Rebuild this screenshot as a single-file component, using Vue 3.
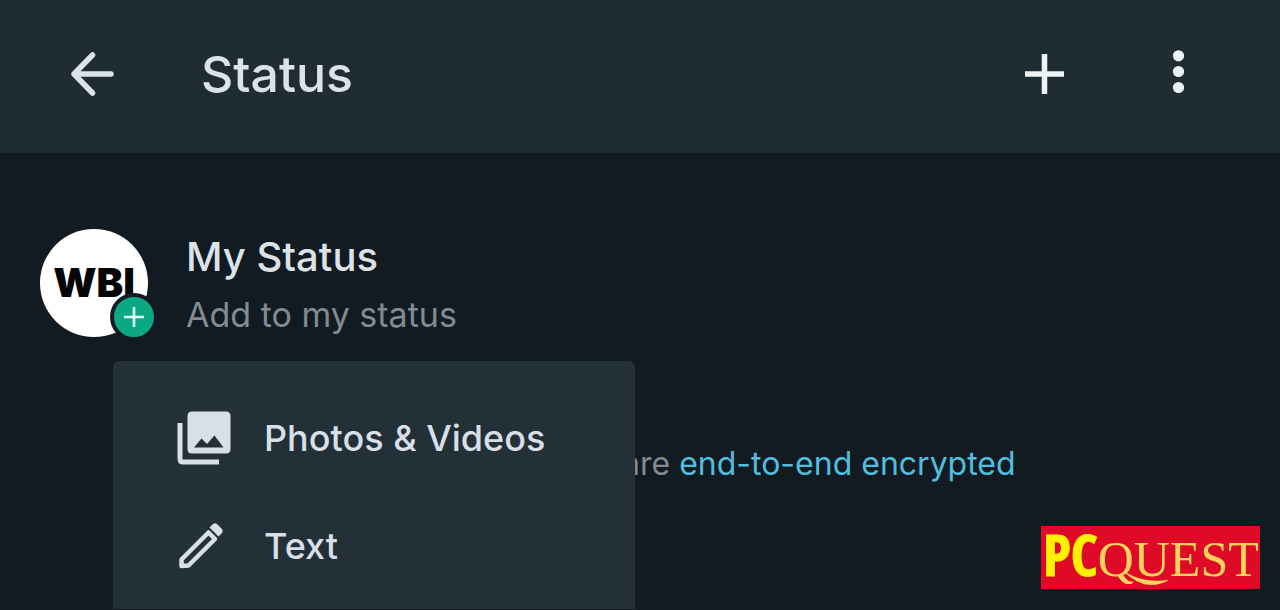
<script setup>
const menuItems = [
  { id: 'media', label: 'Photos & Videos' },
  { id: 'text', label: 'Text' },
]
</script>

<template>
  <div class="page">
    <header class="bar">
      <button class="icon-button" type="button" aria-label="Back">
        <svg width="48" height="48" viewBox="0 0 48 48" fill="none" stroke="currentColor" stroke-width="5.500" stroke-linecap="round" stroke-linejoin="round">
          <path d="M43 24H6M24.500 5L6 24L24.500 43" />
        </svg>
      </button>
      <h1 class="title">Status</h1>
      <button class="icon-button bright" type="button" aria-label="Add status">
        <svg width="48" height="48" viewBox="0 0 48 48" fill="none" stroke="currentColor" stroke-width="5.500">
          <path d="M24.500 4V44M5 24H44" />
        </svg>
      </button>
      <button class="icon-button bright more" type="button" aria-label="More options">
        <svg width="48" height="48" viewBox="0 0 48 48" fill="currentColor">
          <circle cx="24.500" cy="5.800" r="5.600" />
          <circle cx="24.500" cy="21.500" r="5.600" />
          <circle cx="24.500" cy="37.500" r="5.600" />
        </svg>
      </button>
    </header>

    <main class="content">
      <section class="status">
        <div class="avatar">
          <span class="initials">WBI</span>
          <span class="badge">
            <svg width="40" height="40" viewBox="0 0 40 40" fill="none" stroke="#dcfff4" stroke-width="2.600">
              <path d="M20 10V30M10 20H30" />
            </svg>
          </span>
        </div>
        <div class="labels">
          <h2 class="name">My Status</h2>
          <p class="hint">Add to my status</p>
        </div>
        <div class="menu" role="menu">
          <button v-for="item in menuItems" :key="item.id" class="menu-item" type="button" role="menuitem">
            <svg v-if="item.id === 'media'" width="56" height="56" viewBox="0 0 56 56">
              <path d="M4 13V49Q4 52 7 52H43" fill="none" stroke="currentColor" stroke-width="5" />
              <path fill="currentColor" fill-rule="evenodd" d="M16 1.500H50Q54.500 1.500 54.500 6V39Q54.500 43.500 50 43.500H16Q11.500 43.500 11.500 39V6Q11.500 1.500 16 1.500ZM18 37.500H47.500L38.500 25.500L31 34L25.500 28.500Z" />
            </svg>
            <svg v-else width="56" height="56" viewBox="0 0 56 56">
              <path d="M5.500 41.500L32.500 14.500L39 21L12.500 47.500L5.500 48Z" fill="none" stroke="currentColor" stroke-width="4.500" stroke-linejoin="round" />
              <path d="M33.500 9.500L37 6Q39 4.500 41 6L46 11Q47.500 13 46 15L42.500 18.500Z" fill="currentColor" />
            </svg>
            <span>{{ item.label }}</span>
          </button>
        </div>
      </section>
      <p class="notice">are <a href="#encryption">end-to-end encrypted</a></p>
    </main>

    <div class="logo">
      <span class="logo-pc">PC</span><span class="logo-quest">QUEST</span>
      <svg class="swash" width="60" height="24" viewBox="0 0 60 24" aria-hidden="true">
        <path d="M4 3C14 8 24 15 50 12C34 21 20 18 4 3Z" fill="#fbd35c" />
      </svg>
    </div>
  </div>
</template>

<style>
body {
  margin: 0;
  background: #121b22;
}
</style>

<style scoped>
.page {
  position: relative;
  box-sizing: border-box;
  min-height: 100vh;
  overflow: hidden;
  background: #121b22;
  color: #dce3e8;
  font-family: Inter, Roboto, sans-serif;
}
.bar {
  display: flex;
  align-items: center;
  box-sizing: border-box;
  height: 153px;
  padding: 0 78px 6px 68px;
  background: #202c33;
}
button {
  margin: 0;
  border: 0;
  padding: 0;
  background: none;
  color: inherit;
  font: inherit;
  text-align: left;
  cursor: pointer;
}
svg {
  display: block;
}
.icon-button {
  flex: none;
}
.bright {
  color: #eef4f6;
}
.more {
  margin-left: 86px;
}
.title {
  flex: 1;
  margin: 0 0 0 85px;
  font-size: 50px;
  font-weight: 500;
  line-height: 60px;
}
.content {
  padding: 76px 40px 0;
}
.status {
  position: relative;
  display: flex;
  gap: 38px;
}
.avatar {
  position: relative;
  display: flex;
  flex: none;
  align-items: center;
  justify-content: center;
  width: 108px;
  height: 108px;
  border-radius: 50%;
  background: #fff;
}
.initials {
  color: #050505;
  font-size: 40px;
  font-weight: 900;
  line-height: 40px;
}
.badge {
  position: absolute;
  right: -10px;
  bottom: -4px;
  border: 4px solid #121b22;
  border-radius: 50%;
  background: #0ba884;
}
.name {
  margin: 2px 0 0;
  font-size: 40px;
  font-weight: 500;
  line-height: 52px;
}
.hint {
  margin: 11px 0 0;
  color: #828b91;
  font-size: 34px;
  line-height: 42px;
}
.menu {
  position: absolute;
  top: 132px;
  left: 73px;
  box-sizing: border-box;
  width: 522px;
  padding: 23px 0 9px;
  border-radius: 6px 6px 0 0;
  background: #233037;
}
.menu-item {
  display: flex;
  align-items: center;
  gap: 32px;
  width: 100%;
  height: 108px;
  padding-left: 63px;
  color: #d8dfe6;
  font-size: 36px;
  font-weight: 500;
}
.notice {
  margin: 106px 0 0 582px;
  color: #828b91;
  font-size: 32px;
  line-height: 42px;
}
.notice a {
  color: #53bdde;
  text-decoration: none;
}
.logo {
  position: absolute;
  right: 20px;
  bottom: 21px;
  display: flex;
  align-items: baseline;
  box-sizing: border-box;
  width: 219px;
  height: 63px;
  padding-left: 2px;
  background: #df0a28;
  line-height: 56px;
}
.logo-pc {
  color: #fff200;
  font-family: "Liberation Sans Narrow", "Open Sans Condensed", "Liberation Sans", sans-serif;
  font-size: 58px;
  font-weight: 700;
  -webkit-text-stroke: 1px #fff200;
}
.logo-quest {
  color: #fbd35c;
  font-family: "Liberation Serif", serif;
  font-size: 50px;
}
.swash {
  position: absolute;
  left: 78px;
  top: 42px;
}
</style>
